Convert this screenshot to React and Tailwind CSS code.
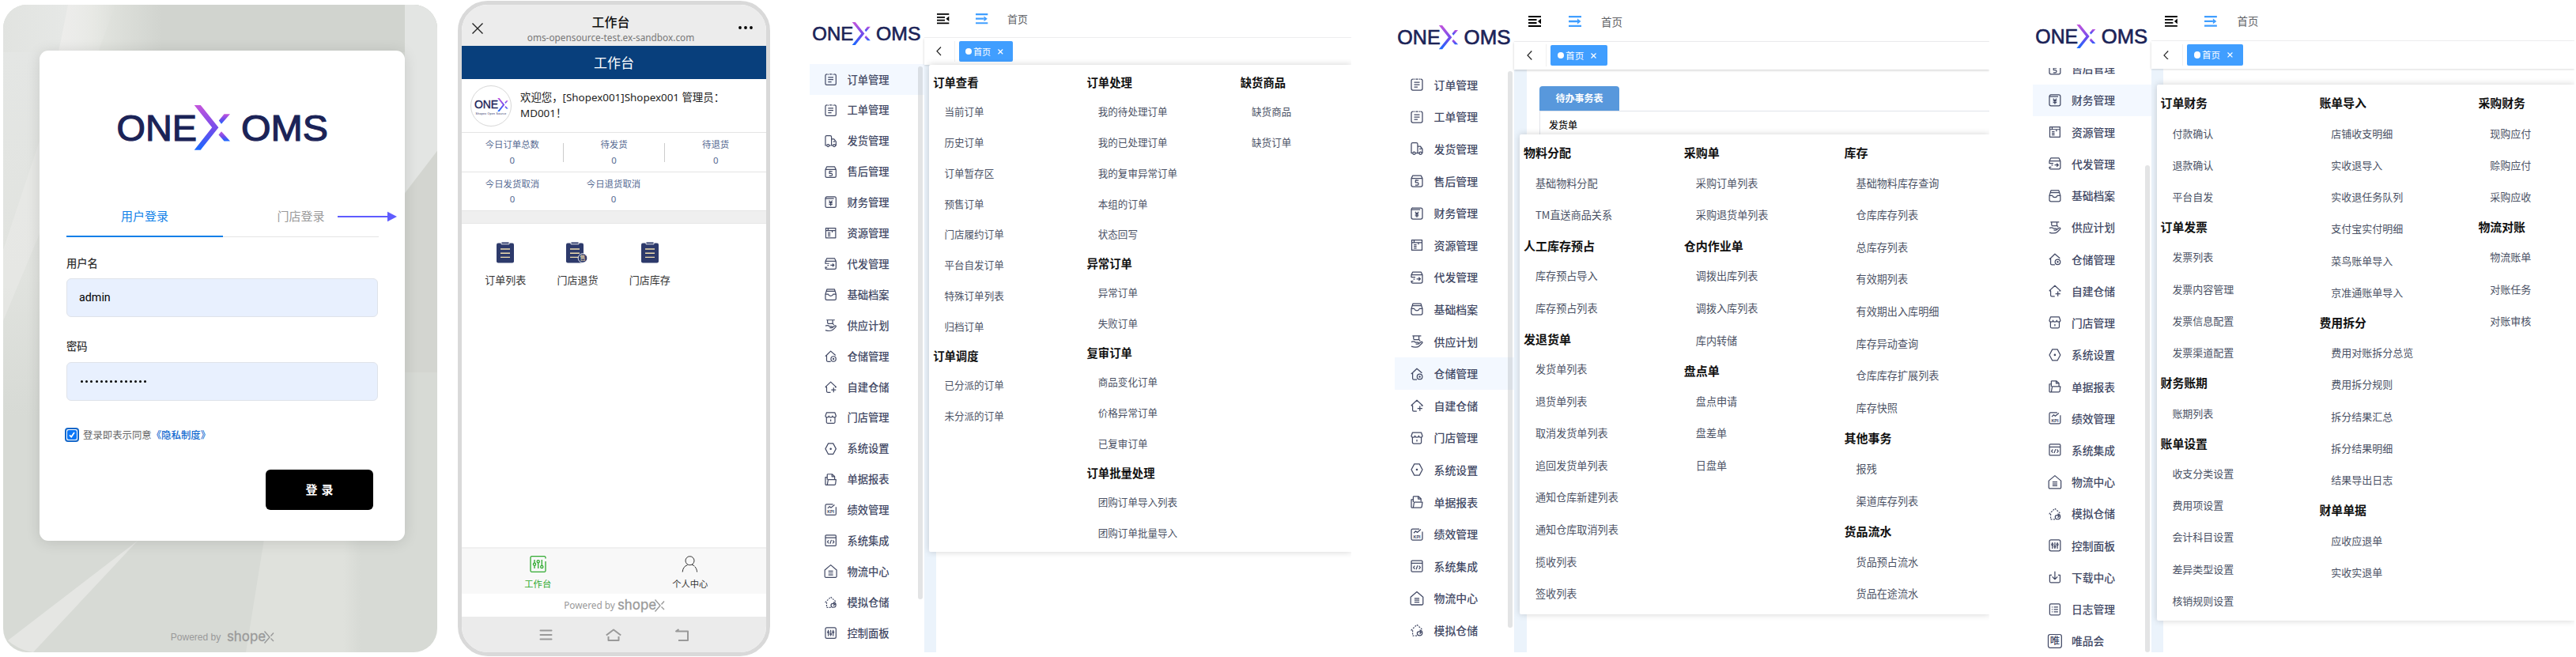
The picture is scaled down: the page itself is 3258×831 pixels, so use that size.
import { useId } from "react";
import clsx from "clsx";

const NAV = [
  ["order", "订单管理"],
  ["order", "工单管理"],
  ["truck", "发货管理"],
  ["aftersale", "售后管理"],
  ["finance", "财务管理"],
  ["resource", "资源管理"],
  ["dispatch", "代发管理"],
  ["archive", "基础档案"],
  ["supply", "供应计划"],
  ["warehouse", "仓储管理"],
  ["selfbuild", "自建仓储"],
  ["store", "门店管理"],
  ["setting", "系统设置"],
  ["report", "单据报表"],
  ["kpi", "绩效管理"],
  ["code", "系统集成"],
  ["logistics", "物流中心"],
  ["mock", "模拟仓储"],
  ["control", "控制面板"],
  ["download", "下载中心"],
  ["log", "日志管理"],
  ["vip", "唯品会"],
];

const ORDER_MENU = [
  [
    { title: "订单查看", items: ["当前订单", "历史订单", "订单暂存区", "预售订单", "门店履约订单", "平台自发订单", "特殊订单列表", "归档订单"] },
    { title: "订单调度", items: ["已分派的订单", "未分派的订单"] },
  ],
  [
    { title: "订单处理", items: ["我的待处理订单", "我的已处理订单", "我的复审异常订单", "本组的订单", "状态回写"] },
    { title: "异常订单", items: ["异常订单", "失败订单"] },
    { title: "复审订单", items: ["商品变化订单", "价格异常订单", "已复审订单"] },
    { title: "订单批量处理", items: ["团购订单导入列表", "团购订单批量导入"] },
  ],
  [{ title: "缺货商品", items: ["缺货商品", "缺货订单"] }],
];

const STOCK_MENU = [
  [
    { title: "物料分配", items: ["基础物料分配", "TM直送商品关系"] },
    { title: "人工库存预占", items: ["库存预占导入", "库存预占列表"] },
    { title: "发退货单", items: ["发货单列表", "退货单列表", "取消发货单列表", "追回发货单列表", "通知仓库新建列表", "通知仓库取消列表", "揽收列表", "签收列表"] },
  ],
  [
    { title: "采购单", items: ["采购订单列表", "采购退货单列表"] },
    { title: "仓内作业单", items: ["调拨出库列表", "调拨入库列表", "库内转储"] },
    { title: "盘点单", items: ["盘点申请", "盘差单", "日盘单"] },
  ],
  [
    { title: "库存", items: ["基础物料库存查询", "仓库库存列表", "总库存列表", "有效期列表", "有效期出入库明细", "库存异动查询", "仓库库存扩展列表", "库存快照"] },
    { title: "其他事务", items: ["报残", "渠道库存列表"] },
    { title: "货品流水", items: ["货品预占流水", "货品在途流水"] },
  ],
];

const FINANCE_MENU = [
  [
    { title: "订单财务", items: ["付款确认", "退款确认", "平台自发"] },
    { title: "订单发票", items: ["发票列表", "发票内容管理", "发票信息配置", "发票渠道配置"] },
    { title: "财务账期", items: ["账期列表"] },
    { title: "账单设置", items: ["收支分类设置", "费用项设置", "会计科目设置", "差异类型设置", "核销规则设置"] },
  ],
  [
    { title: "账单导入", items: ["店铺收支明细", "实收退导入", "实收退任务队列", "支付宝实付明细", "菜鸟账单导入", "京准通账单导入"] },
    { title: "费用拆分", items: ["费用对账拆分总览", "费用拆分规则", "拆分结果汇总", "拆分结果明细", "结果导出日志"] },
    { title: "财单单据", items: ["应收应退单", "实收实退单"] },
  ],
  [
    { title: "采购财务", items: ["现购应付", "赊购应付", "采购应收"] },
    { title: "物流对账", items: ["物流账单", "对账任务", "对账审核"] },
  ],
];

const ICONS = {
  order: (
    <>
      <path d="M3.5 1H3a2 2 0 0 0-2 2v10a2 2 0 0 0 2 2h10a2 2 0 0 0 2-2V3a2 2 0 0 0-2-2h-.5M6.3 1h3.4" />
      <path d="M4.6.4v1.4M11.4.4v1.4M4.5 5h7M4.5 8h7M4.5 11h4.5" />
    </>
  ),
  truck: (
    <>
      <path d="M2.8 13.6H1V2.2A1.7 1.7 0 0 1 2.7.6h4.6A1.7 1.7 0 0 1 9 2.2v11.4H6.2M9 5h3.3L15 8.5v5.1h-1M9 13.6h2.2M11.2 8.4h2.4" />
      <circle cx="4.5" cy="13.7" r="1.6" />
      <circle cx="12.6" cy="13.7" r="1.6" />
    </>
  ),
  aftersale: (
    <>
      <path d="M1 4.6h14V13a2 2 0 0 1-2 2H3a2 2 0 0 1-2-2zM1 4.6 2.8 1h10.4L15 4.6" />
      <path d="M10.2 7.2H6.3v2.6h2.2a1.6 1.6 0 0 1 0 3.2H6M6.3 7.2l1.2-1" />
    </>
  ),
  finance: (
    <>
      <path d="M12.2 3.2H1V13a2 2 0 0 0 2 2h10a2 2 0 0 0 2-2V3a2 2 0 0 0-2-2H3a2 2 0 0 0-2 2.2" />
      <path d="m5.8 5.8 2.2 2.6 2.2-2.6M5.7 8.8h4.6M5.7 10.8h4.6M8 8.4V13" />
    </>
  ),
  resource: (
    <path d="M1.5 1.6h13v12.8h-13zM1.5 4.8h13M4.5 1.8v3M4.2 7.6h3.4M4.2 9.6h3.4M4.2 11.8h3.4M10 4.8v2.4" />
  ),
  dispatch: (
    <>
      <path d="M1 8V4.6h14V13a2 2 0 0 1-2 2H3a2 2 0 0 1-2-2v-1M1 4.6 2.8 1h10.4L15 4.6" />
      <path d="M1 7.6h5M3.6 10h1.8M1 12.6h2.4M7.6 9.8h4.6M10.3 7.8l2.1 2-2.1 2" />
    </>
  ),
  archive: (
    <path d="M1 7.4 3 1h10l2 6.4V13a2 2 0 0 1-2 2H3a2 2 0 0 1-2-2zM2.6 3.6h10.8M1 7.4h3.6c.6 1.6 1.6 2.4 3.4 2.4s2.8-.8 3.4-2.4H15" />
  ),
  supply: (
    <path d="M2.400.8h11M3.800.8v3.400a1.500 1.500 0 0 0 1.500 1.500h5.300V.8M1 8.600c2.400-1.300 3.800-.8 5.400.6h3c1.400 0 1.400 2 0 2H6.600M10.600 10.400l2.800-2c1.200-.8 2.200.6 1.200 1.600l-3.400 3.400c-2.600 2.200-6.600 2-10.200.8M10.800 5.700c.8.4 1.200 1 1.200 2" />
  ),
  warehouse: (
    <>
      <path d="m.8 8 2-1.700L8 1.200l6.400 5.600M2.600 7v6.400A1.600 1.600 0 0 0 4.200 15H8" />
      <circle cx="11.6" cy="11.4" r="3.300" />
      <circle cx="11.6" cy="11.4" r=".6" />
    </>
  ),
  selfbuild: <path d="M.8 8H2.600v5.400A1.600 1.600 0 0 0 4.200 15h3.600M.8 8 8 1.200 15.200 8h-1.600M11.800 8.600v6.200M8.700 11.700h6.200" />,
  store: (
    <path d="M2.500 1h11L15 5.200c0 1.300-1.100 1.900-2.300 1.900s-2.300-.6-2.300-1.900c0 1.300-1.100 1.900-2.400 1.900s-2.400-.6-2.400-1.900c0 1.300-1.100 1.900-2.300 1.900S1 6.500 1 5.200zM2.400 7v6.200A1.700 1.700 0 0 0 4.100 15h7.800a1.700 1.700 0 0 0 1.700-1.800V7M8 10v2.600" />
  ),
  setting: (
    <>
      <path d="M4.800.9h6.400L15 8l-3.800 7.100H4.800L1 8z" />
      <circle cx="8" cy="8" r=".7" fill="currentColor" />
    </>
  ),
  report: (
    <path d="M3.400 8V1.600a.8.8 0 0 1 .8-.8h5.600l3.400 3v3.400M9.600 1v3h3.400M1 15V4.800h2.400M1 15h11.800a1.500 1.500 0 0 0 1.500-1.300L15 8H4.600L3.400 15" />
  ),
  kpi: (
    <>
      <path d="M11 1H2.500A1.500 1.500 0 0 0 1 2.500v11A1.500 1.500 0 0 0 2.500 15h11a1.500 1.500 0 0 0 1.500-1.500V4.400M4 6.200l2.500-2.400 2 1.600L13 1.600" />
      <text x="8" y="13" textAnchor="middle" fontSize="5.500" fontWeight="700" fill="currentColor" stroke="none" fontFamily="Liberation Sans, sans-serif">KPI</text>
    </>
  ),
  code: (
    <>
      <rect x="1" y="1" width="14" height="14" rx="1.200" />
      <path d="M1 4.400h14M5.400 7.600 3.600 9.700l1.800 2.100M10.600 7.600l1.800 2.100-1.800 2.100M8.900 7.200l-1.800 5" />
    </>
  ),
  logistics: (
    <path d="M.2 6.200 8-.4l7.800 6.600v8.400a1.400 1.400 0 0 1-1.400 1.400H1.600a1.400 1.400 0 0 1-1.400-1.400zM4.900 7.800h6.200M4.900 10.200h6.200M4.900 12.600h6.200" />
  ),
  mock: (
    <>
      <path strokeDasharray="2 1.400" d="M8 15H2.600V8H1l7-6.800L14.400 7" />
      <path d="M11.400 8.200c2.200 0 3.400 1.400 3.400 3.300s-1.500 3.400-3.400 3.400-3-1.300-3-2.900 1.100-2.200 2.400-2.200 1.800.8 1.800 1.700-.6 1.200-1.200 1.200M12.400 8.300v2.600h2.200" />
    </>
  ),
  control: (
    <>
      <rect x="1" y="1" width="14" height="14" rx="2" />
      <path d="M4.800 4v1.600M4.800 8v4M8 4v4M8 10.600V12M11.200 4v1.600M11.200 8v4" />
      <circle cx="4.800" cy="6.800" r="1" />
      <circle cx="8" cy="9.400" r="1" />
      <circle cx="11.200" cy="6.800" r="1" />
    </>
  ),
  download: <path d="M4 5.400H1.400v8.100A1.500 1.500 0 0 0 2.900 15h10.200a1.500 1.500 0 0 0 1.500-1.500V5.400H12M8 .8v9.800M4.600 7.400 8 10.800l3.400-3.400" />,
  log: (
    <>
      <rect x="1.400" y="1" width="13.200" height="14" rx="1.500" />
      <path d="M4 5h1M6.600 5H12M4 8h1M6.600 8H12M4 11h1M6.600 11H12" />
    </>
  ),
  vip: (
    <>
      <rect x="-.5" y="-.5" width="17" height="17" rx="2.500" />
      <text x="8" y="12.600" textAnchor="middle" fontSize="12.500" fontWeight="500" fill="currentColor" stroke="none" fontFamily="Noto Sans CJK SC, sans-serif">唯</text>
    </>
  ),
};

function NavIcon({ name }) {
  return (
    <svg className="h-4 w-4 shrink-0 overflow-visible" viewBox="0 0 16 16" fill="none" stroke="currentColor" strokeWidth="1.25" strokeLinejoin="round">
      {ICONS[name]}
    </svg>
  );
}

// Two-part X of the brand, in the logo's own coordinates
function BrandX() {
  const id = useId().replace(/[^a-zA-Z0-9]/g, "");
  const fill = `url(#x${id})`;
  return (
    <>
      <defs>
        <linearGradient id={`x${id}`} x1="0" y1="0" x2="0" y2="1">
          <stop offset="0" stopColor="#c455dc" />
          <stop offset="0.55" stopColor="#6f4cec" />
          <stop offset="1" stopColor="#1769ff" />
        </linearGradient>
      </defs>
      <path fill={fill} d="M96.700 0h8l22.700 28.300-22.700 28.400h-8l22.500-28.400z" />
      <path fill={fill} d="M134.500 11.200h7.500L131 23.800l-3.200-4.200z" />
      <path fill={fill} d="M131 33.200 142 45.500h-7.500l-7-8z" />
    </>
  );
}

function Logo({ className, short }) {
  return (
    <svg className={className} viewBox={short ? "0 0 142 57" : "0 0 265 57"}>
      <g fill="#1b2357" stroke="#1b2357" strokeWidth="1.200" fontSize="47" fontFamily="Liberation Sans, Arial, sans-serif">
        <text x="-1.500" y="45" textLength="101.500" lengthAdjust="spacingAndGlyphs">ONE</text>
        {!short && <text x="156" y="45" textLength="110" lengthAdjust="spacingAndGlyphs">OMS</text>}
      </g>
      <BrandX />
    </svg>
  );
}

function Shopex() {
  return (
    <svg className="h-4 w-[59px] overflow-visible" viewBox="0 0 59 16">
      <text x="0" y="12.500" fontSize="17" fill="#999" stroke="#999" strokeWidth="0.3" textLength="49" lengthAdjust="spacingAndGlyphs" fontFamily="Inter, sans-serif">shope</text>
      <path d="M47.500.500 54 8l-6.500 7.500M59 2.500l-3.500 4M55.500 9.500l3.500 3.500" fill="none" stroke="#999" strokeWidth="1.400" />
    </svg>
  );
}

function LoginPanel() {
  return (
    <div className="relative mt-[6px] flex h-[819px] w-[549px] shrink-0 flex-col overflow-hidden rounded-[30px] bg-[#d7dad5] pl-[46px]">
      <svg className="absolute inset-0 h-full w-full" viewBox="0 0 549 819" preserveAspectRatio="none">
        <defs>
          <linearGradient id="wallLeft" x1="0" x2="1" y1="0" y2="0">
            <stop offset="0" stopColor="#e1e3e0" />
            <stop offset="0.400" stopColor="#e6e8e6" />
            <stop offset="0.550" stopColor="#e4e6e1" />
            <stop offset="1" stopColor="#d1d4cf" />
          </linearGradient>
          <linearGradient id="wallDown" x1="0" x2="0" y1="0" y2="1">
            <stop offset="0" stopColor="#e4e6e4" />
            <stop offset="0.600" stopColor="#e1e3df" />
            <stop offset="1" stopColor="#d7dad5" />
          </linearGradient>
          <linearGradient id="beam" x1="0" x2="1" y1="0" y2="0">
            <stop offset="0" stopColor="#ededeb" />
            <stop offset="1" stopColor="#ededeb" stopOpacity="0" />
          </linearGradient>
          <linearGradient id="wallBand" x1="0" x2="1" y1="0" y2="0">
            <stop offset="0" stopColor="#dfe1dc" />
            <stop offset="0.850" stopColor="#dfe1dc" />
            <stop offset="1" stopColor="#d7dad5" />
          </linearGradient>
        </defs>
        <path d="M200 0h349v60H200z" fill="#d1d4cf" />
        <path d="M0 0h201v60H0z" fill="url(#wallLeft)" />
        <path d="M0 60h60v460H0z" fill="url(#wallDown)" />
        <path d="M82 0h60L120 60H70z" fill="url(#beam)" />
        <path d="M50 160v120L0 400v-90z" fill="#ebecea" opacity="0.500" />
        <path d="M508 0h41v185l-41 53z" fill="#e3e5e3" />
        <path d="M549 185v280h-50V251z" fill="#d3d5d0" />
        <path d="M170 678 6 804c6 6 18 13 32 15z" fill="#e5e6e3" />
        <path d="M331 670 307 819h145V670z" fill="url(#wallBand)" />
      </svg>
      <div className="relative mt-[58px] flex h-[620px] w-[462px] shrink-0 flex-col rounded-[11px] bg-white px-[34px] shadow-[0_2px_18px_rgba(0,0,0,0.12)]">
        <Logo className="mt-[69px] ml-[65px] h-[57px] w-[265px] overflow-visible" />
        <div className="mt-[58px] flex h-[52px] text-[15px]">
          <div className="w-[198px] shrink-0 border-b-2 border-[#117fe8] pt-[14px] text-center leading-[22px] text-[#117fe8]">用户登录</div>
          <div className="relative w-[197px] shrink-0 border-b border-[#e5e5e5] pt-[14px] text-center leading-[22px] text-[#999]">
            门店登录
            <svg className="absolute top-[19px] left-[145px] h-[14px] w-[75px]" viewBox="0 0 75 14">
              <path d="M0 7h64" stroke="#5f5cff" strokeWidth="2.200" />
              <path d="M63 .8 75 7l-12 6.200z" fill="#5f5cff" />
            </svg>
          </div>
        </div>
        <label className="mt-[22px] text-[13.3px] leading-[22px] font-medium text-[#333]">用户名</label>
        <div className="mt-[8px] flex h-[49px] items-center rounded-md border border-[#dfe3ea] bg-[#e8f0fe] px-[15px] font-[Roboto] text-[14.3px] text-black">admin</div>
        <label className="mt-[26px] text-[13.3px] leading-[22px] font-medium text-[#333]">密码</label>
        <div className="mt-[9px] flex h-[49px] items-center gap-[3.200px] rounded-md border border-[#dfe3ea] bg-[#e8f0fe] px-[17px]">
          {Array.from({ length: 14 }, (_, i) => (
            <span key={i} className="h-[3px] w-[3px] rounded-full bg-black" />
          ))}
        </div>
        <div className="mt-[33px] -ml-[2px] flex items-center text-[12.4px] leading-[20px] text-[#666]">
          <span className="flex h-[18px] w-[18px] items-center justify-center rounded-[4px] border-2 border-[#1467c9] bg-white">
            <svg className="h-[12px] w-[12px] rounded-[2px] bg-[#0b76f6]" viewBox="0 0 12 12">
              <path d="m3 6.300 2.200 2.300L9 3" fill="none" stroke="#fff" strokeWidth="1.700" />
            </svg>
          </span>
          <span className="ml-[5px]">登录即表示同意</span>
          <span className="font-medium text-[#1068cf]">《隐私制度》</span>
        </div>
        <button className="mt-[34px] mr-[6px] h-[51px] w-[136px] self-end rounded-md bg-black pl-[5px] text-[15px] font-bold tracking-[5px] text-white">登录</button>
      </div>
      <div className="relative mt-[113px] flex w-[462px] items-center justify-center gap-2 text-[12px] leading-[18px] text-[#999]">
        <span className="font-['Liberation_Sans']">Powered by</span>
        <Shopex />
      </div>
    </div>
  );
}

function Stat({ label }) {
  return (
    <div className="flex w-[128px] flex-col items-center text-[11.4px] leading-[19.500px] text-[#566a92]">
      <span>{label}</span>
      <span className="font-['Noto_Sans']">0</span>
    </div>
  );
}

function Clipboard({ badge }) {
  return (
    <svg className={clsx("h-[27px] w-[22px] overflow-visible", badge && "mr-[6px]")} viewBox="0 0 22 27">
      <rect x="0" y="1.500" width="22" height="25" rx="2" fill="#2d3a6b" />
      <path d="M6 0h10v2.800H6z" fill="#2d3a6b" stroke="#fff" strokeWidth="0.900" />
      <path d="M5 9h12M5 14.200h12M5 19.400h12" stroke="#f2dfae" strokeWidth="1.400" />
      {badge && (
        <>
          <circle cx="21" cy="20.500" r="5.800" fill="#2d3a6b" stroke="#fff" strokeWidth="0.900" />
          <text x="21" y="23.200" fontSize="7.500" textAnchor="middle" fill="#f2dfae" fontFamily="Noto Sans CJK SC, sans-serif">售</text>
        </>
      )}
    </svg>
  );
}

function PhonePanel() {
  return (
    <div className="mt-px ml-[26px] flex h-[829px] w-[395px] shrink-0 flex-col self-start overflow-hidden rounded-[38px] border-[5px] border-[#d9d9d9] bg-white">
      <div className="flex h-[52px] items-start bg-[#ececec] px-[13px]">
        <svg className="mt-[23px] h-[14px] w-[14px]" viewBox="0 0 14 14">
          <path d="m.5.500 13 13M13.500.500l-13 13" stroke="#222" strokeWidth="1.400" />
        </svg>
        <div className="flex flex-1 flex-col items-center pt-[10px]">
          <span className="text-[16px] leading-[23px] font-medium text-[#111]">工作台</span>
          <span className="font-['Noto_Sans'] text-[11.800px] leading-[16px] text-[#777]">oms-opensource-test.ex-sandbox.com</span>
        </div>
        <svg className="mt-[27px] mr-[4px] h-[4px] w-[18px]" viewBox="0 0 18 4">
          <circle cx="2" cy="2" r="1.900" />
          <circle cx="9" cy="2" r="1.900" />
          <circle cx="16" cy="2" r="1.900" />
        </svg>
      </div>
      <div className="flex h-[42px] items-center justify-center bg-[#083f7c] text-[17px] text-white">工作台</div>
      <div className="flex h-[68px] items-center border-b border-[#e4e4e4] pl-[11px]">
        <div className="flex h-[52px] w-[52px] shrink-0 flex-col items-center rounded-full border-[1.500px] border-[#d8d8d8] pt-[15px]">
          <Logo short className="h-[17px] w-[43px]" />
          <span className="font-['Liberation_Sans'] text-[3.500px] leading-[6px] tracking-[0.3px] text-[#1b2357]">Shopex Open Source</span>
        </div>
        <p className="-mt-[1px] ml-[11px] font-['Noto_Sans','Noto_Sans_CJK_SC'] text-[13.400px] leading-[20px] whitespace-nowrap text-[#222]">
          欢迎您，[Shopex001]Shopex001 管理员：
          <br />
          MD001！
        </p>
      </div>
      <div className="flex h-[50px] items-center border-b border-[#e4e4e4]">
        <Stat label="今日订单总数" />
        <span className="h-6 w-px bg-[#ccc]" />
        <Stat label="待发货" />
        <span className="h-6 w-px bg-[#ccc]" />
        <Stat label="待退货" />
      </div>
      <div className="flex h-[48px] items-center">
        <Stat label="今日发货取消" />
        <Stat label="今日退货取消" />
      </div>
      <div className="h-[17px] border-y border-[#e6e6e6] bg-[#efefef]" />
      <div className="flex pt-[23px] pl-[9.500px] text-[13px] leading-[20px] text-[#333]">
        <div className="flex w-[91.300px] flex-col items-center gap-[11px]"><Clipboard />订单列表</div>
        <div className="flex w-[91.300px] flex-col items-center gap-[11px]"><Clipboard badge />门店退货</div>
        <div className="flex w-[91.300px] flex-col items-center gap-[11px]"><Clipboard />门店库存</div>
      </div>
      <div className="mt-auto flex h-[59px] shrink-0 border-t-2 border-[#f0f0f0] bg-[#f8f8f8] text-[11.3px] leading-[18px]">
        <div className="flex flex-1 flex-col items-center gap-[5px] pt-[9px] text-[#2fa92f]">
          <svg className="h-[21px] w-[21px]" viewBox="0 0 21 21" fill="none" stroke="currentColor" strokeWidth="1.300">
            <path d="M20 3.500V2.200A1.500 1.500 0 0 0 18.500.700h-16A1.500 1.500 0 0 0 1 2.200v16.600a1.500 1.500 0 0 0 1.500 1.500h16a1.500 1.500 0 0 0 1.500-1.500V7" />
            <path d="M6 5v4M6 12.500V16M10.700 9v7M15.300 5v7.500" />
            <circle cx="6" cy="10.700" r="1.600" />
            <circle cx="10.700" cy="7.200" r="1.600" />
            <circle cx="15.300" cy="14" r="1.600" />
          </svg>
          工作台
        </div>
        <div className="flex flex-1 flex-col items-center gap-[5px] pt-[9px] text-[#333]">
          <svg className="h-[21px] w-[21px]" viewBox="0 0 21 21" fill="none" stroke="currentColor" strokeWidth="1">
            <circle cx="10.500" cy="6.200" r="5.500" />
            <path d="M1.200 20.500c.3-4.800 2.700-7.800 6.300-8.800M13 11.300c1.500.3 2.400.8 3.300 1.700M16.800 13.700c1.600 1.700 2.600 4 2.800 6.800" />
          </svg>
          个人中心
        </div>
      </div>
      <div className="flex h-[29px] shrink-0 items-center justify-center gap-[3px] text-[#999]">
        <span className="font-['Noto_Sans'] text-[11.800px]">Powered by</span>
        <Shopex />
      </div>
      <div className="flex h-[45px] shrink-0 items-center justify-center gap-[67px] bg-[#ebebeb] text-[#999]">
        <svg className="h-[14px] w-[17px]" viewBox="0 0 17 14" stroke="currentColor" strokeWidth="2" strokeLinecap="round">
          <path d="M1.500 1.500h14M1.500 7h14M1.500 12.500h14" />
        </svg>
        <svg className="h-[16px] w-[20px]" viewBox="0 0 20 16" fill="none" stroke="currentColor" strokeWidth="2" strokeLinejoin="round">
          <path d="m.800 8.500 9.200-7 9.200 7M3.500 10v5h13v-5" />
        </svg>
        <svg className="h-[16px] w-[19px]" viewBox="0 0 19 16" fill="none" stroke="currentColor" strokeWidth="2" strokeLinejoin="round">
          <path d="M5.500 1 2 3.500h15V15H5" />
        </svg>
      </div>
    </div>
  );
}

function TopBar() {
  return (
    <>
      <div className="flex h-[52.500px] shrink-0 items-center border-b border-[#f2f2f4] pt-[3px] pl-[17.500px]">
        <svg className="h-[14px] w-[16px]" viewBox="0 0 16 14">
          <path d="M0 1h16M0 5h10.500M0 9h10.500M0 13h16" stroke="#000" strokeWidth="1.800" />
          <path d="M16 3.600v6.800L12 7z" />
        </svg>
        <svg className="ml-[35px] h-[14px] w-[16px]" viewBox="0 0 16 14">
          <path d="M0 1.200h16M0 7h11M0 12.800h16" stroke="#409eff" strokeWidth="2.300" />
          <path d="M11 3.600 15.500 7 11 10.400z" fill="#409eff" />
        </svg>
        <span className="ml-[25.500px] text-[13.500px] leading-5 text-[#606266]">首页</span>
      </div>
      <div className="relative z-10 flex h-[35.200px] shrink-0 items-center bg-white pl-[16px] shadow-[0_1px_3px_rgba(0,0,0,0.2)]">
        <svg className="h-[12px] w-[7px]" viewBox="0 0 7 12" fill="none" stroke="#222" strokeWidth="1.200">
          <path d="M6.300.500 1 6l5.300 5.500" />
        </svg>
        <span className="ml-[17px] h-7 w-px bg-[#f0f0f0]" />
        <div className="ml-[5px] flex h-[26.500px] w-[71.500px] items-center rounded-[2px] bg-[#409eff] pl-[8.500px] text-[11.700px] text-white">
          <span className="h-[8.500px] w-[8.500px] rounded-full bg-white" />
          <span className="ml-[2px]">首页</span>
          <svg className="mt-px ml-[9px] h-[7px] w-[7px]" viewBox="0 0 7 7">
            <path d="m.5.500 6 6M6.500.500l-6 6" stroke="#fff" strokeWidth="1.200" />
          </svg>
        </div>
      </div>
    </>
  );
}

function MegaMenu({ columns, className }) {
  return (
    <div className={clsx("absolute right-0 left-[7px] z-20 flex rounded-l-[2px] bg-white pt-[5.500px] pl-[5px] shadow-[0_0_9px_rgba(0,0,0,0.18)]", className)}>
      {columns.map((groups, i) => (
        <div key={i} className="w-[202.800px] shrink-0">
          {groups.map((group) => (
            <div key={group.title}>
              <h3 className="h-[36.500px] text-[15px] leading-[36.500px] font-bold text-[#111]">{group.title}</h3>
              {group.items.map((item) => (
                <div key={item} className="h-[40.600px] pl-[15px] text-[13.100px] leading-[40.600px] whitespace-nowrap text-[#4b5265]">
                  {item}
                </div>
              ))}
            </div>
          ))}
        </div>
      ))}
    </div>
  );
}

function AdminPanel({ nav, active, columns, menuClass, listClass, thumbClass, children }) {
  return (
    <div className="flex h-full overflow-hidden bg-white">
      <aside className="relative flex w-[151px] shrink-0 flex-col">
        <div className="relative z-10 flex h-[87px] shrink-0 items-center pt-[7px] pl-[4px]">
          <Logo className="h-[30.500px] w-[142px] overflow-visible" />
        </div>
        <div className="min-h-0 flex-1 overflow-hidden">
          <div className={listClass}>
            {nav.map(([icon, label]) => (
              <div key={label} className={clsx("flex h-[40.600px] items-center gap-[13.500px] pl-5 text-[13.900px] font-medium text-[#424965]", label === active && "bg-[#f3f8ff]")}>
                <NavIcon name={icon} />
                {label}
              </div>
            ))}
          </div>
        </div>
        <span className={clsx("absolute right-[2px] w-[6px] rounded-full bg-[#90939940]", thumbClass)} />
      </aside>
      <main className="relative flex min-w-0 flex-1 flex-col">
        <TopBar />
        <div className="flex min-h-0 flex-1 bg-[#ebf3fb] pl-4">
          <div className="flex-1 bg-white">{children}</div>
        </div>
        <MegaMenu columns={columns} className={menuClass} />
      </main>
    </div>
  );
}

export default function App() {
  return (
    <div className="flex h-[831px] w-[3258px] overflow-hidden bg-white pl-1 font-['Noto_Sans_CJK_SC',sans-serif]">
      <LoginPanel />
      <PhonePanel />
      <div className="ml-[50px] h-[825px] w-[685px] shrink-0 overflow-hidden">
        <div className="-mt-[2.300px] h-[863px] [zoom:0.958]">
          <AdminPanel nav={NAV.slice(0, 19)} active="订单管理" columns={ORDER_MENU} menuClass="top-[87.600px] h-[643px]" thumbClass="top-[89.500px] h-[704px]" />
        </div>
      </div>
      <div className="ml-[55px] h-[825px] w-[752px] shrink-0 overflow-hidden">
        <AdminPanel nav={NAV.slice(0, 18)} active="仓储管理" columns={STOCK_MENU} menuClass="top-[169.700px] h-[607px]" thumbClass="top-[89.500px] h-[704px]">
          <div className="pt-[21px] pl-4">
            <div className="flex h-[31.500px] w-[101px] items-center justify-center rounded-t-[4px] bg-[#5898dc] text-[12px] font-bold text-white">待办事务表</div>
            <div className="h-[60px] border-t border-l border-[#e1e4ea] pt-[7px] pl-[11px] text-[12px] leading-5 font-medium text-[#111]">发货单</div>
          </div>
        </AdminPanel>
      </div>
      <div className="ml-[55px] h-[825px] w-[685px] shrink-0 overflow-hidden">
        <div className="h-[832.500px] [zoom:0.991]">
          <AdminPanel nav={NAV.slice(3)} active="财务管理" columns={FINANCE_MENU} menuClass="top-[108px] h-[684px]" listClass="-mt-[20px]" thumbClass="top-[211px] bottom-0" />
        </div>
      </div>
    </div>
  );
}
